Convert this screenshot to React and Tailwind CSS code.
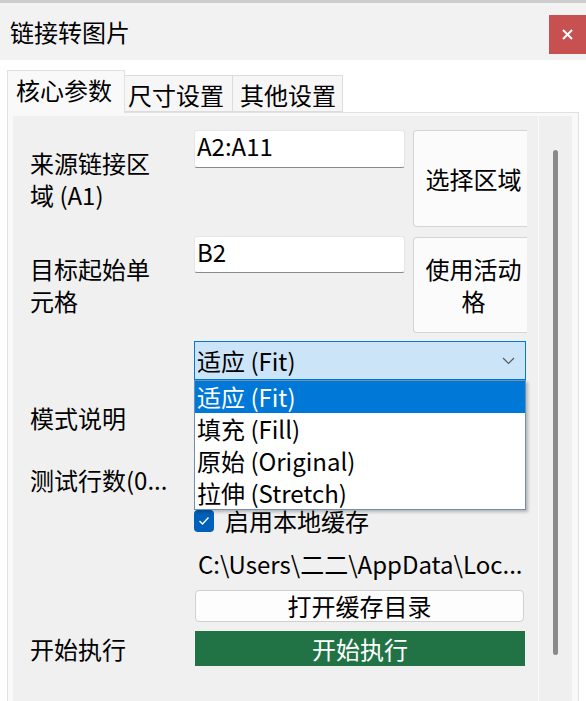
import React from "react";

function Chevron() {
  return (
    <svg width="13" height="8" viewBox="0 0 13 8" fill="none">
      <polyline points="1,1 6.5,6.5 12,1" stroke="#5a5a5a" strokeWidth="1.2" />
    </svg>
  );
}

function Check() {
  return (
    <svg width="12" height="10" viewBox="0 0 12 10" fill="none">
      <polyline points="1.5,5 4.5,8 10.5,1.5" stroke="#ffffff" strokeWidth="1.4" />
    </svg>
  );
}

export default function App() {
  return (
    <div className="w-[586px] h-[701px] bg-white overflow-hidden text-black font-['Noto_Sans_CJK_SC',sans-serif]">
      <div className="h-[3px] bg-[#cdcdcd]" />
      <div className="h-[57px] bg-[#f2f2f2] flex items-start justify-between">
        <div className="pl-[10px] pt-[13px] text-[24px] leading-[32px]">链接转图片</div>
        <div className="mt-[12px] w-[37px] h-[39px] bg-[#c75050] flex items-center justify-center">
          <svg width="11" height="11" viewBox="0 0 11 11">
            <path d="M1 1 L10 10 M10 1 L1 10" stroke="#ffffff" strokeWidth="2" />
          </svg>
        </div>
      </div>
      <div className="h-[10px]" />
      <div className="flex items-end h-[42px] pl-[7px]">
        <div className="relative z-10 h-[43px] -mb-[1px] w-[118px] bg-[#f9f9f9] border border-b-0 border-[#e1e1e1] pl-[8px] pt-[3px] text-[24px] leading-[32px]">
          核心参数
        </div>
        <div className="h-[37px] w-[108px] bg-[#f6f6f6] border border-l-0 border-[#dcdcdc] pl-[3px] pt-[3px] text-[24px] leading-[32px]">
          尺寸设置
        </div>
        <div className="h-[37px] w-[110px] bg-[#f6f6f6] border border-l-0 border-[#dcdcdc] pl-[7px] pt-[3px] text-[24px] leading-[32px]">
          其他设置
        </div>
      </div>
      <div className="ml-[7px] w-[572px] h-[600px] border border-[#e1e1e1] bg-[#f9f9f9] pt-[3px] pl-[5px] pr-[6px] flex">
        <div className="w-[525px] h-full bg-[#f0f0f0] pl-[17px] pt-[14px]">
          <div className="relative w-[497px] text-[24px] leading-[32px]">
            {/* Row 1 */}
            <div className="flex h-[97px]">
              <div className="w-[164px] self-center">
                <div className="w-[140px]">来源链接区域 (A1)</div>
              </div>
              <div className="w-[211px] h-[38px] bg-white border border-[#e6e6e6] border-b-[#8a8a8a] rounded-[3px] pl-[2px] leading-[30px]">
                A2:A11
              </div>
              <div className="ml-[8px] w-[114px] h-[97px] bg-[#fbfbfb] border border-r-0 border-[#d4d4d4] rounded-l-[4px] pl-[6px] flex items-center justify-center text-center">
                选择区域
              </div>
            </div>
            {/* Row 2 */}
            <div className="flex h-[97px] mt-[9px]">
              <div className="w-[164px] self-center">
                <div className="w-[140px]">目标起始单元格</div>
              </div>
              <div className="w-[211px] h-[37px] bg-white border border-[#e6e6e6] border-b-[#8a8a8a] rounded-[3px] pl-[2px] leading-[30px]">
                B2
              </div>
              <div className="ml-[8px] mt-[1px] w-[114px] h-[96px] bg-[#fbfbfb] border border-r-0 border-[#d4d4d4] rounded-l-[4px] pl-[6px] flex items-center justify-center text-center">
                <div className="w-[104px]">使用活动格</div>
              </div>
            </div>
            {/* Row 3: combobox */}
            <div className="flex h-[39px] mt-[8px]">
              <div className="w-[164px]" />
              <div className="w-[332px] h-[39px] bg-[#cce4f7] border border-[#0078d7] flex items-center justify-between pl-[2px] pr-[10px]">
                <span>适应 (Fit)</span>
                <Chevron />
              </div>
            </div>
            {/* Row 4 */}
            <div className="flex h-[76px] items-center">
              <div className="w-[164px]">模式说明</div>
            </div>
            {/* Row 5 */}
            <div className="flex h-[48px] items-center">
              <div className="w-[164px]">测试行数(0...</div>
            </div>
            {/* Row 6 */}
            <div className="flex h-[34px] items-center">
              <div className="w-[164px]" />
              <div className="w-[20px] h-[22px] rounded-[4px] bg-[#005fb8] flex items-center justify-center">
                <Check />
              </div>
              <div className="ml-[11px]">启用本地缓存</div>
            </div>
            {/* Row 7 */}
            <div className="flex h-[52px] items-center">
              <div className="w-[164px]" />
              <div className="pl-[4px]">{"C:\\Users\\二二\\AppData\\Loc..."}</div>
            </div>
            {/* Row 8 */}
            <div className="flex h-[32px]">
              <div className="w-[165px]" />
              <div className="w-[329px] h-[32px] bg-[#fdfdfd] border border-[#d0d0d0] rounded-[4px] flex items-center justify-center leading-[30px]">
                打开缓存目录
              </div>
            </div>
            {/* Row 9 */}
            <div className="flex h-[35px] mt-[9px] items-center">
              <div className="w-[165px]">开始执行</div>
              <div className="w-[330px] h-[35px] bg-[#217346] text-white flex items-center justify-center">
                开始执行
              </div>
            </div>

            {/* Dropdown popup */}
            <div className="absolute left-[164px] top-[250px] w-[332px] h-[130px] bg-white border border-[#6f8fb5] shadow-[2px_2px_3px_rgba(0,0,0,0.25)]">
              <div className="h-[32px] bg-[#0078d7] text-white pl-[2px]">适应 (Fit)</div>
              <div className="h-[32px] pl-[2px]">填充 (Fill)</div>
              <div className="h-[32px] pl-[2px]">原始 (Original)</div>
              <div className="h-[32px] pl-[2px]">拉伸 (Stretch)</div>
            </div>
          </div>
        </div>
        <div className="flex-1 h-full bg-[#efefef] border-l border-[#fafafa] flex justify-center pt-[34px]">
          <div className="w-[5px] h-[505px] rounded-full bg-[#8a8a8a]" />
        </div>
      </div>
    </div>
  );
}
